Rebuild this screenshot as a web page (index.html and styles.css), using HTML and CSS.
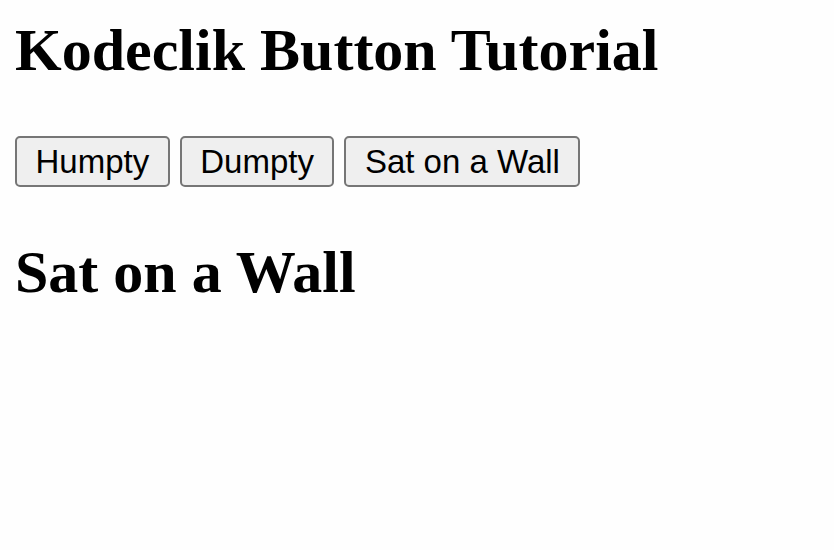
FILE: index.html
```html
<!DOCTYPE html>
<html>

<head>
    <title>Kodeclik Button Tutorial</title>
    <link rel="stylesheet" href="styles.css">
</head>

<body>
    <h1 class="title">Kodeclik Button Tutorial</h1>
    <div class="button-row">
        <button class="button" onclick="showText(this)">Humpty</button>
        <button class="button" onclick="showText(this)">Dumpty</button>
        <button class="button" onclick="showText(this)">Sat on a Wall</button>
    </div>
    <h1 id="output" class="output">Sat on a Wall</h1>

    <script>
        function showText(btn) {
            document.querySelector("#output").textContent = btn.textContent
        }
    </script>
</body>

</html>
```

FILE: styles.css
```css
body {
    margin: 0;
    padding: 16px 15px;
    background-color: #fefefe;
    font-family: "Liberation Serif", "Times New Roman", serif;
    color: #000;
}

.title,
.output {
    font-size: 60px;
    font-weight: bold;
    margin: 0;
}

.button-row {
    display: flex;
    gap: 10px;
    margin: 51px 0 51px;
}

.button {
    font-family: "Liberation Sans", Arial, sans-serif;
    font-size: 33px;
    line-height: 37px;
    color: #000;
    background-color: #efefef;
    border: 2px solid #767676;
    border-radius: 5px;
    padding: 5px 18.5px;
    cursor: pointer;
}
```
